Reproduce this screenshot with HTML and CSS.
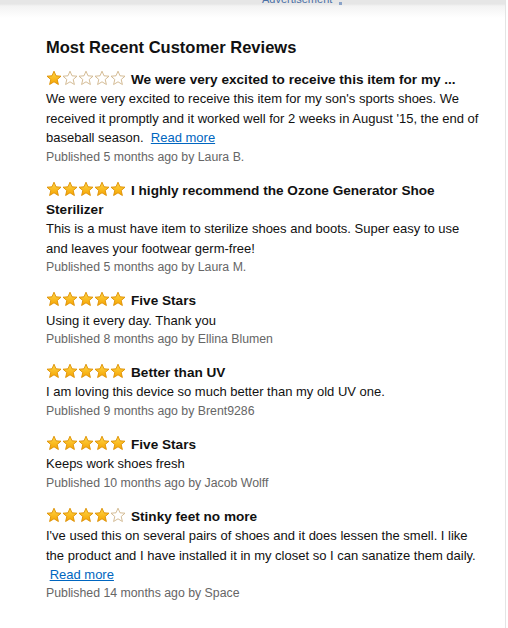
FILE: index.html
```html
<!DOCTYPE html>
<html>
<head>
<meta charset="utf-8">
<link rel="stylesheet" href="styles.css">
</head>
<body>
<svg width="0" height="0" class="defs">
  <defs>
    <linearGradient id="gold" x1="0" y1="0" x2="0" y2="1">
      <stop offset="0" stop-color="#ffd84a"/>
      <stop offset="1" stop-color="#f5a300"/>
    </linearGradient>
    <symbol id="sf" viewBox="0 0 16 16">
      <path d="M8 1.2 L10 5.8 L15 6.2 L11.2 9.5 L12.4 14.5 L8 11.8 L3.6 14.5 L4.8 9.5 L1 6.2 L6 5.8 Z" fill="url(#gold)" stroke="#dd8f00" stroke-width="0.9" stroke-linejoin="round"/>
    </symbol>
    <symbol id="se" viewBox="0 0 16 16">
      <path d="M8 1.2 L10 5.8 L15 6.2 L11.2 9.5 L12.4 14.5 L8 11.8 L3.6 14.5 L4.8 9.5 L1 6.2 L6 5.8 Z" fill="#fff" stroke="#cfb48a" stroke-width="0.9" stroke-linejoin="round"/>
    </symbol>
  </defs>
</svg>
<div class="page">
  <div class="topbar"><span class="ad">Advertisement</span><span class="ad-icon"></span></div>
  <div class="content">
    <h2 class="heading">Most Recent Customer Reviews</h2>

    <div class="review">
      <div class="title-line"><span class="stars"><svg><use href="#sf"/></svg><svg><use href="#se"/></svg><svg><use href="#se"/></svg><svg><use href="#se"/></svg><svg><use href="#se"/></svg></span><span class="title">We were very excited to receive this item for my ...</span></div>
      <p class="body">We were very excited to receive this item for my son's sports shoes. We received it promptly and it worked well for 2 weeks in August '15, the end of baseball season. &nbsp;<a class="more" href="#">Read more</a></p>
      <p class="meta">Published 5 months ago by Laura B.</p>
    </div>

    <div class="review">
      <div class="title-line"><span class="stars"><svg><use href="#sf"/></svg><svg><use href="#sf"/></svg><svg><use href="#sf"/></svg><svg><use href="#sf"/></svg><svg><use href="#sf"/></svg></span><span class="title">I highly recommend the Ozone Generator Shoe Sterilizer</span></div>
      <p class="body">This is a must have item to sterilize shoes and boots. Super easy to use and leaves your footwear germ-free!</p>
      <p class="meta">Published 5 months ago by Laura M.</p>
    </div>

    <div class="review">
      <div class="title-line"><span class="stars"><svg><use href="#sf"/></svg><svg><use href="#sf"/></svg><svg><use href="#sf"/></svg><svg><use href="#sf"/></svg><svg><use href="#sf"/></svg></span><span class="title">Five Stars</span></div>
      <p class="body">Using it every day. Thank you</p>
      <p class="meta">Published 8 months ago by Ellina Blumen</p>
    </div>

    <div class="review">
      <div class="title-line"><span class="stars"><svg><use href="#sf"/></svg><svg><use href="#sf"/></svg><svg><use href="#sf"/></svg><svg><use href="#sf"/></svg><svg><use href="#sf"/></svg></span><span class="title">Better than UV</span></div>
      <p class="body">I am loving this device so much better than my old UV one.</p>
      <p class="meta">Published 9 months ago by Brent9286</p>
    </div>

    <div class="review">
      <div class="title-line"><span class="stars"><svg><use href="#sf"/></svg><svg><use href="#sf"/></svg><svg><use href="#sf"/></svg><svg><use href="#sf"/></svg><svg><use href="#sf"/></svg></span><span class="title">Five Stars</span></div>
      <p class="body">Keeps work shoes fresh</p>
      <p class="meta">Published 10 months ago by Jacob Wolff</p>
    </div>

    <div class="review">
      <div class="title-line"><span class="stars"><svg><use href="#sf"/></svg><svg><use href="#sf"/></svg><svg><use href="#sf"/></svg><svg><use href="#sf"/></svg><svg><use href="#se"/></svg></span><span class="title">Stinky feet no more</span></div>
      <p class="body">I've used this on several pairs of shoes and it does lessen the smell. I like the product and I have installed it in my closet so I can sanatize them daily.<br>&nbsp;<a class="more" href="#">Read more</a></p>
      <p class="meta">Published 14 months ago by Space</p>
    </div>
  </div>
</div>
</body>
</html>
```

FILE: styles.css
```css
html, body {
  margin: 0;
  padding: 0;
  background: #fff;
}
.defs {
  position: absolute;
  width: 0;
  height: 0;
}
.page {
  width: 505px;
  min-height: 628px;
  border-right: 1px solid #e4e4e4;
  font-family: "Liberation Sans", Arial, sans-serif;
  color: #111;
}
.topbar {
  height: 18px;
  background: linear-gradient(#e6e6e6 0, #e6e6e6 4px, #f3f3f3 6px, #fff 18px);
  position: relative;
  overflow: hidden;
}
.ad {
  position: absolute;
  left: 262px;
  top: -7px;
  font-size: 11px;
  color: #4a6fa5;
}
.ad-icon {
  position: absolute;
  left: 339px;
  top: 2px;
  width: 3px;
  height: 3px;
  background: #8aa3c8;
}
.content {
  width: 436px;
  padding: 19px 0 0 46px;
}
.heading {
  margin: 0 0 13px;
  font-size: 16.5px;
  line-height: 20px;
  font-weight: bold;
}
.review {
  margin-bottom: 13.6px;
}
.title-line {
  font-size: 13.6px;
  line-height: 19.4px;
  font-weight: bold;
}
.stars {
  display: inline-flex;
  vertical-align: -2px;
  margin-right: 5px;
}
.stars svg {
  width: 16px;
  height: 16px;
}
.title {
  font-weight: bold;
}
.body {
  margin: 0;
  font-size: 13px;
  line-height: 19.4px;
}
.more {
  color: #0066c0;
  text-decoration: underline;
}
.meta {
  margin: 0;
  font-size: 12.3px;
  line-height: 19.4px;
  color: #666;
}
```
